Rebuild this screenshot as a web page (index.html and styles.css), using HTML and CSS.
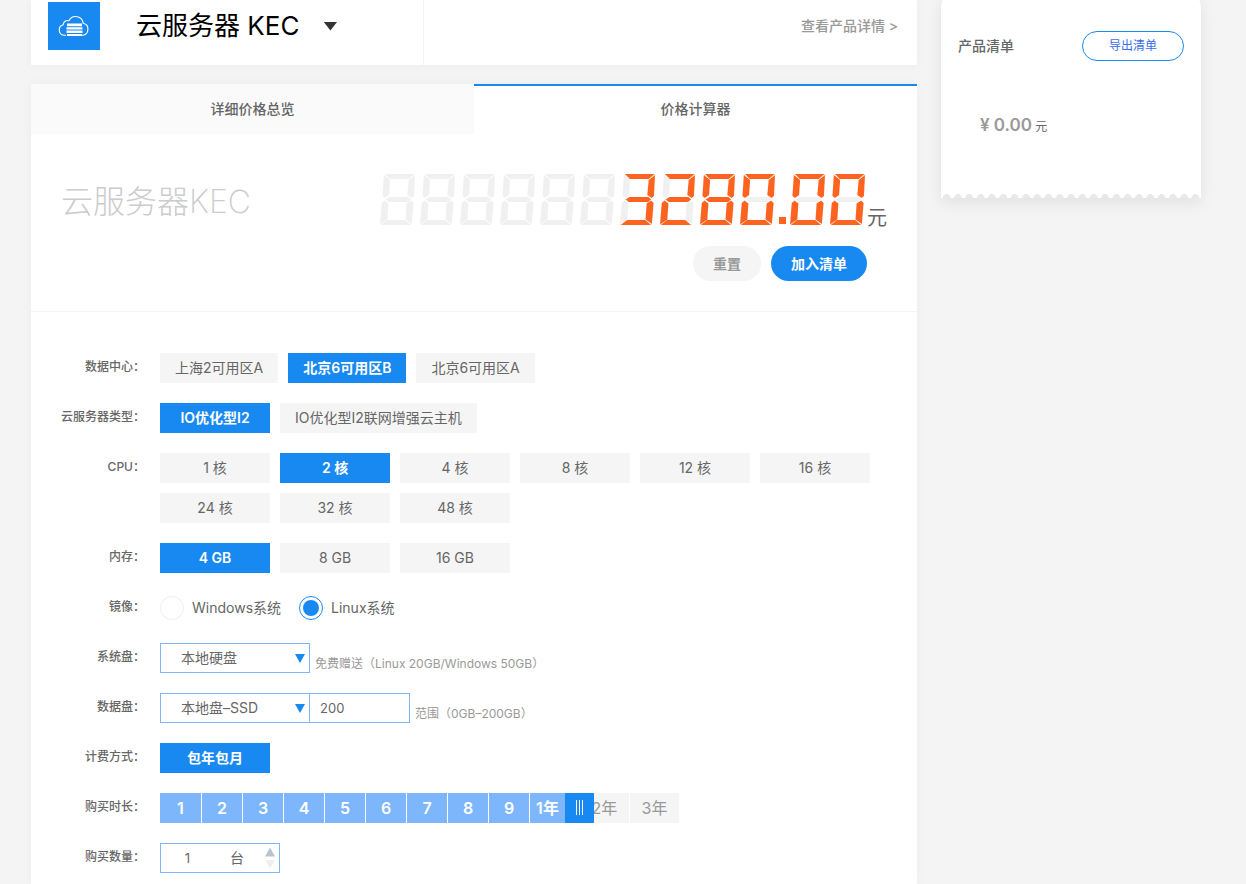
FILE: index.html
```html
<!DOCTYPE html>
<html lang="zh-CN">
  <head>
    <meta charset="UTF-8" />
    <meta name="viewport" content="width=device-width, initial-scale=1.0" />
    <title>云服务器 KEC 价格计算器</title>
    <link rel="stylesheet" href="styles.css" />
  </head>
  <body>
    <div class="page">
      <main class="main">
        <header class="card product">
          <div class="product-name">
            <svg class="product-logo" viewBox="0 0 52 48" aria-hidden="true">
              <rect width="52" height="48" fill="#1989f2" />
              <path d="M18 33.300h-1.500a5.400 5.400 0 0 1-1.300-10.600 4.400 4.400 0 0 1 5.700-4 7.600 7.600 0 0 1 14.300 2.600 6.100 6.100 0 0 1-.7 12H34" fill="none" stroke="#fff" stroke-width="1.100" />
              <path d="M19 21.600h15v2.600H19zM18.500 25.200h16v2.400h-16zM18.500 28.600h16v2.400h-16zM19 32h15v2H19z" fill="#fff" />
            </svg>
            <h1>云服务器 KEC</h1>
            <button type="button" class="caret" aria-label="切换产品"></button>
          </div>
          <a href="#" class="product-link">查看产品详情 &gt;</a>
        </header>

        <section class="card calculator">
          <nav class="tabs">
            <a href="#" class="tab">详细价格总览</a>
            <a href="#" class="tab active">价格计算器</a>
          </nav>

          <div class="total">
            <h2>云服务器KEC</h2>
            <div class="total-side">
              <div class="price">
                <div class="lcd" id="lcd" role="img" data-value="3280.00" aria-label="3280.00"></div>
                <span class="price-unit">元</span>
              </div>
              <div class="actions">
                <button type="button" class="btn btn-reset">重置</button>
                <button type="button" class="btn btn-add">加入清单</button>
              </div>
            </div>
          </div>

          <form class="config">
            <div class="row">
              <span class="label">数据中心：</span>
              <div class="options">
                <button type="button" class="option">上海2可用区A</button>
                <button type="button" class="option active">北京6可用区B</button>
                <button type="button" class="option">北京6可用区A</button>
              </div>
            </div>
            <div class="row">
              <span class="label">云服务器类型：</span>
              <div class="options">
                <button type="button" class="option active">IO优化型I2</button>
                <button type="button" class="option">IO优化型I2联网增强云主机</button>
              </div>
            </div>
            <div class="row">
              <span class="label">CPU：</span>
              <div class="options">
                <button type="button" class="option">1 核</button>
                <button type="button" class="option active">2 核</button>
                <button type="button" class="option">4 核</button>
                <button type="button" class="option">8 核</button>
                <button type="button" class="option">12 核</button>
                <button type="button" class="option">16 核</button>
                <button type="button" class="option">24 核</button>
                <button type="button" class="option">32 核</button>
                <button type="button" class="option">48 核</button>
              </div>
            </div>
            <div class="row">
              <span class="label">内存：</span>
              <div class="options">
                <button type="button" class="option active">4 GB</button>
                <button type="button" class="option">8 GB</button>
                <button type="button" class="option">16 GB</button>
              </div>
            </div>
            <div class="row">
              <span class="label">镜像：</span>
              <div class="radios">
                <label class="radio"><input type="radio" name="image" value="windows" />Windows系统</label>
                <label class="radio"><input type="radio" name="image" value="linux" checked />Linux系统</label>
              </div>
            </div>
            <div class="row">
              <label class="label" for="systemDisk">系统盘：</label>
              <div class="select">
                <select id="systemDisk">
                  <option>本地硬盘</option>
                </select>
              </div>
              <span class="hint">免费赠送（Linux 20GB/Windows 50GB）</span>
            </div>
            <div class="row">
              <label class="label" for="dataDisk">数据盘：</label>
              <div class="select">
                <select id="dataDisk">
                  <option>本地盘–SSD</option>
                </select>
              </div>
              <input type="text" class="size" value="200" aria-label="数据盘容量" />
              <span class="hint">范围（0GB–200GB）</span>
            </div>
            <div class="row">
              <span class="label">计费方式：</span>
              <div class="options">
                <button type="button" class="option active">包年包月</button>
              </div>
            </div>
            <div class="row">
              <label class="label" for="duration">购买时长：</label>
              <div class="duration">
                <span class="step on">1</span>
                <span class="step on">2</span>
                <span class="step on">3</span>
                <span class="step on">4</span>
                <span class="step on">5</span>
                <span class="step on">6</span>
                <span class="step on">7</span>
                <span class="step on">8</span>
                <span class="step on">9</span>
                <span class="step year on current">1年</span>
                <span class="step year">2年</span>
                <span class="step year">3年</span>
                <input type="range" id="duration" min="1" max="12" value="10" />
              </div>
            </div>
            <div class="row">
              <label class="label" for="count">购买数量：</label>
              <div class="count">
                <input type="text" id="count" value="1" />
                <span>台</span>
                <div class="spinner">
                  <button type="button" class="up" aria-label="增加"></button>
                  <button type="button" class="down" aria-label="减少"></button>
                </div>
              </div>
            </div>
          </form>
        </section>
      </main>

      <aside class="list">
        <div class="list-head">
          <h3>产品清单</h3>
          <button type="button" class="export">导出清单</button>
        </div>
        <p class="list-total"><strong>¥ 0.00</strong> 元</p>
      </aside>
    </div>

    <script src="lcd.js"></script>
  </body>
</html>
```
FILE: styles.css
```css
* {
  box-sizing: border-box;
}
body {
  margin: 0;
  background-color: #f4f4f4;
  color: #666;
  font-family: Inter, "Noto Sans CJK SC", sans-serif;
  font-size: 14px;
  line-height: 20px;
}
h1,
h2,
h3,
p {
  margin: 0;
}
a {
  color: inherit;
  text-decoration: none;
}
button,
input,
select {
  margin: 0;
  padding: 0;
  border: none;
  border-radius: 0;
  background: none;
  color: inherit;
  font: inherit;
}
button {
  cursor: pointer;
}

.page {
  display: flex;
  align-items: flex-start;
  gap: 24px;
  min-height: 100vh;
  padding: 0 45px 0 31px;
}
.main {
  flex: 1;
  min-width: 0;
}
.card {
  background-color: #fff;
  box-shadow: 0 0 10px rgba(0, 0, 0, 0.04);
}

/* product header */
.product {
  display: flex;
  margin-bottom: 19px;
}
.product-name {
  display: flex;
  align-items: center;
  width: 393px;
  padding: 2px 17px 15px;
  border-right: 1px solid #f4f4f4;
}
.product-logo {
  width: 52px;
  height: 48px;
  margin-right: 36px;
}
.product h1 {
  color: #000;
  font-size: 26px;
  font-weight: 400;
  line-height: 40px;
}
.caret {
  width: 14px;
  height: 9px;
  margin-left: 24px;
  background-color: #333;
  clip-path: polygon(0 0, 100% 0, 50% 100%);
}
.product-link {
  margin-left: auto;
  padding: 16px 19px;
  color: #999;
  font-weight: 500;
}

/* tabs */
.tabs {
  display: flex;
}
.tab {
  flex: 1;
  height: 50px;
  border-top: 2px solid #fafafa;
  background-color: #fafafa;
  font-weight: 500;
  line-height: 46px;
  text-align: center;
}
.tab.active {
  border-top-color: #1989f2;
  background-color: #fff;
}

/* total price */
.total {
  display: flex;
  justify-content: space-between;
  padding: 40px 30px 30px;
  border-bottom: 1px solid #f4f4f4;
}
.total h2 {
  padding-top: 4px;
  color: #ccc;
  font-size: 32px;
  font-weight: 200;
  line-height: 48px;
}
.price {
  display: flex;
  align-items: flex-end;
}
.price-unit {
  margin: 0 0 -5px 2px;
  font-size: 20px;
  line-height: 24px;
}
.lcd {
  display: flex;
  gap: 5px;
}
.digit {
  display: grid;
  width: 35px;
  height: 51px;
}
.digit i {
  grid-area: 1 / 1;
  background-color: #f0f0f0;
}
.digit .on {
  background-color: #ff6320;
}
.seg-a {
  clip-path: polygon(14% 0, 99% 0, 82% 10%, 28% 10%);
}
.seg-b {
  clip-path: polygon(100% 2%, 97% 43%, 90% 47%, 78% 41%, 82% 12%);
}
.seg-c {
  clip-path: polygon(89% 52%, 96% 57%, 91% 98%, 73% 89%, 76% 58%);
}
.seg-d {
  clip-path: polygon(2% 100%, 20% 90%, 72% 90%, 89% 100%);
}
.seg-e {
  clip-path: polygon(13% 52%, 24% 58%, 21% 89%, 0 99%, 5% 57%);
}
.seg-f {
  clip-path: polygon(11% 2%, 29% 12%, 26% 41%, 14% 47%, 7% 43%);
}
.seg-g {
  clip-path: polygon(16% 50%, 27% 45%, 81% 45%, 89% 50%, 80% 55%, 25% 55%);
}
.dot {
  align-self: flex-end;
  width: 7px;
  height: 7px;
  margin: 0 -1px 1px;
  background-color: #ff6320;
}
.actions {
  display: flex;
  justify-content: flex-end;
  gap: 10px;
  margin: 21px 20px 0 0;
}
.btn {
  height: 35px;
  padding: 0 20px;
  border-radius: 18px;
  font-weight: 700;
}
.btn-reset {
  background-color: #f5f5f5;
  color: #999;
}
.btn-add {
  background-color: #1989f2;
  color: #fff;
}

/* configuration form */
.config {
  display: flex;
  flex-direction: column;
  gap: 20px;
  padding: 41px 40px 12px 0;
}
.row {
  display: flex;
}
.label {
  flex: none;
  width: 114px;
  margin-right: 15px;
  font-size: 12px;
  font-weight: 500;
  line-height: 28px;
  text-align: right;
}
.options {
  display: flex;
  flex-wrap: wrap;
  gap: 10px;
}
.option {
  min-width: 110px;
  height: 30px;
  padding: 0 15px;
  background-color: #f5f5f5;
}
.option.active {
  background-color: #1989f2;
  color: #fff;
  font-weight: 600;
}
.radios {
  display: flex;
  gap: 18px;
}
.radio {
  display: flex;
  align-items: center;
  gap: 8px;
  height: 30px;
}
.radio input {
  appearance: none;
  width: 24px;
  height: 24px;
  border: 1px solid #eee;
  border-radius: 50%;
}
.radio input:checked {
  border-color: #1989f2;
  padding: 3px;
  background: #1989f2 content-box;
}
.select {
  position: relative;
}
.select::after {
  content: "";
  position: absolute;
  top: 11px;
  right: 5px;
  width: 10px;
  height: 9px;
  background-color: #1989f2;
  clip-path: polygon(0 0, 100% 0, 50% 100%);
  pointer-events: none;
}
.select select {
  appearance: none;
  width: 150px;
  height: 30px;
  padding: 0 20px;
  border: 1px solid #7eb6fb;
}
.size {
  width: 101px;
  height: 30px;
  margin-left: -1px;
  padding: 0 10px;
  border: 1px solid #7eb6fb;
  font-size: 13px;
}
.hint {
  align-self: flex-end;
  margin-left: 5px;
  color: #999;
  font-size: 12px;
  line-height: 18px;
}

/* purchase duration */
.duration {
  position: relative;
  display: flex;
  gap: 1px;
}
.step {
  width: 40px;
  height: 30px;
  background-color: #f5f5f5;
  color: #999;
  font-size: 16px;
  line-height: 30px;
  text-align: center;
}
.step:first-child {
  width: 41px;
}
.step.year {
  width: 49px;
}
.step.on {
  background-color: #7eb6fb;
  color: #fff;
  font-weight: 600;
}
.step.current {
  padding-right: 14px;
}
.duration input {
  appearance: none;
  position: absolute;
  top: 0;
  left: 0;
  width: 524px;
  height: 30px;
}
.duration input::-webkit-slider-thumb {
  appearance: none;
  width: 29px;
  height: 30px;
  background: repeating-linear-gradient(90deg, #fff 0 1px, transparent 1px 3px) 11px 7px / 7px 15px no-repeat #1989f2;
}

/* purchase count */
.count {
  display: flex;
  align-items: center;
  width: 120px;
  height: 30px;
  border: 1px solid #7eb6fb;
}
.count input {
  width: 53px;
  margin-right: 16px;
  font-size: 13px;
  text-align: center;
}
.spinner {
  display: flex;
  flex-direction: column;
  gap: 3px;
  margin-left: auto;
  padding-right: 4px;
}
.spinner button {
  width: 10px;
  height: 9px;
}
.up {
  background-color: #b9c3d2;
  clip-path: polygon(50% 0, 100% 100%, 0 100%);
}
.down {
  background-color: #eee;
  clip-path: polygon(0 0, 100% 0, 50% 100%);
}

/* product list receipt */
.list {
  width: 260px;
  height: 210px;
  margin-top: -12px;
  padding: 43px 17px 0;
  border-radius: 20px 20px 0 0;
  background: radial-gradient(circle at 50% 100%, #e9e9e9 4px, #fff 4px) left bottom / 11px 4px space no-repeat #fff;
  box-shadow: 0 5px 15px rgba(0, 0, 0, 0.08);
}
.list-head {
  display: flex;
  align-items: center;
  justify-content: space-between;
}
.list h3 {
  font-size: 14px;
  font-weight: 500;
}
.export {
  width: 102px;
  height: 30px;
  border: 1px solid #1989f2;
  border-radius: 15px;
  color: #3a6cf0;
  font-size: 12px;
}
.list-total {
  padding: 52px 22px 0;
  font-size: 12px;
  line-height: 24px;
}
.list-total strong {
  color: #999;
  font-size: 17px;
  font-weight: 600;
}
```
FILE: lcd.js
```js
// segments that are lit for each number
const SEGMENTS = {
  0: "abcdef",
  1: "bc",
  2: "abdeg",
  3: "abcdg",
  4: "bcfg",
  5: "acdfg",
  6: "acdefg",
  7: "abc",
  8: "abcdefg",
  9: "abcdfg",
};

function renderLcd(lcd) {
  // 12 digits and the decimal point
  const value = lcd.dataset.value.padStart(13, " ");
  for (const char of value) {
    const cell = document.createElement("span");
    if (char === ".") {
      cell.className = "dot";
    } else {
      cell.className = "digit";
      for (const name of "abcdefg") {
        const seg = document.createElement("i");
        seg.className = "seg-" + name;
        if ((SEGMENTS[char] || "").includes(name)) {
          seg.classList.add("on");
        }
        cell.appendChild(seg);
      }
    }
    lcd.appendChild(cell);
  }
}

renderLcd(document.getElementById("lcd"));
```
